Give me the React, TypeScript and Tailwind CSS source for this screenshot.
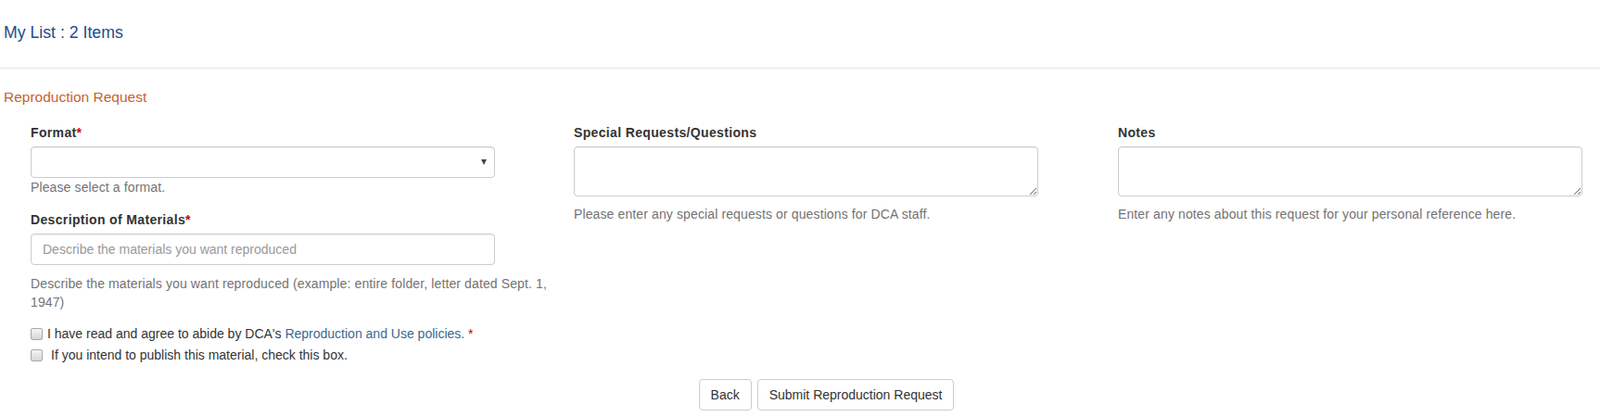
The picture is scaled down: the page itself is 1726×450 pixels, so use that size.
import React from "react";

const inputBox =
  "block w-[501px] rounded-[4px] border border-[#ccc] bg-white px-[12px] text-[14px] text-[#555] shadow-[inset_0_1px_1px_rgba(0,0,0,0.075)] outline-none";

const labelCls = "mb-[5px] block font-bold tracking-[0.35px]";
const helpCls = "text-[#737373] tracking-[0.12px]";

const Checkbox: React.FC = () => (
  <input
    type="checkbox"
    className="m-0 h-[13px] w-[13px] shrink-0 appearance-none rounded-[2px] border border-[#a9a9a9] bg-gradient-to-b from-[#f4f4f4] to-[#d6d6d6]"
  />
);

const App: React.FC = () => {
  return (
    <div
      className="min-h-[450px] w-full overflow-hidden bg-white text-[14px] leading-[20px] text-[#333]"
      style={{ fontFamily: '"Liberation Sans", Arial, sans-serif' }}
    >
      {/* Header */}
      <div className="h-[74px] border-b border-[#e5e5e5] pl-[4px] pt-[25px]">
        <h4 className="text-[17.7px] leading-[20px] text-[#1b4c8d]">My List : 2 Items</h4>
      </div>

      <div className="pl-[4px] pt-[22px]">
        <h5 className="text-[15.5px] leading-[18px] text-[#c5632f]">Reproduction Request</h5>
      </div>

      {/* Form */}
      <form className="flex pl-[33px] pt-[19px]">
        <div className="w-[566px]">
          <label className={labelCls}>
            Format<span className="text-[#c00]">*</span>
          </label>
          <div className="relative w-[501px]">
            <select className={`${inputBox} h-[34px] appearance-none`}>
              <option value=""></option>
            </select>
            <span className="pointer-events-none absolute right-[9px] top-[14px] h-0 w-0 border-x-[3.5px] border-t-[6px] border-x-transparent border-t-[#444]" />
          </div>
          <p className={helpCls}>Please select a format.</p>

          <label className={`${labelCls} mt-[15px]`}>
            Description of Materials<span className="text-[#c00]">*</span>
          </label>
          <input
            type="text"
            placeholder="Describe the materials you want reproduced"
            className={`${inputBox} h-[34px] placeholder:text-[#999]`}
          />
          <p className={`${helpCls} mt-[10px]`}>
            Describe the materials you want reproduced (example: entire folder, letter dated Sept. 1,
            1947)
          </p>

          <div className="mt-[14px] flex items-center">
            <Checkbox />
            <span className="ml-[5px]">
              I have read and agree to abide by DCA's{" "}
              <a href="#" className="text-[#3a6892]">
                Reproduction and Use policies.
              </a>{" "}
              <span className="text-[#c00]">*</span>
            </span>
          </div>
          <div className="mt-[3px] flex items-center">
            <Checkbox />
            <span className="ml-[9px]">If you intend to publish this material, check this box.</span>
          </div>
        </div>

        <div className="ml-[20px] w-[557px]">
          <label className={labelCls}>Special Requests/Questions</label>
          <textarea rows={2} className={`${inputBox} h-[54px] py-[6px]`} />
          <p className={`${helpCls} mt-[9px]`}>
            Please enter any special requests or questions for DCA staff.
          </p>
        </div>

        <div className="ml-[30px] w-[501px]">
          <label className={labelCls}>Notes</label>
          <textarea rows={2} className={`${inputBox} h-[54px] py-[6px]`} />
          <p className={`${helpCls} mt-[9px]`}>
            Enter any notes about this request for your personal reference here.
          </p>
        </div>
      </form>

      {/* Buttons */}
      <div className="mt-[16px] flex justify-center gap-[6px] pl-[57px]">
        <button
          type="button"
          className="h-[34px] rounded-[4px] border border-[#ccc] bg-white px-[12px] text-[14px] text-[#333]"
        >
          Back
        </button>
        <button
          type="submit"
          className="h-[34px] rounded-[4px] border border-[#ccc] bg-white px-[12px] text-[14px] text-[#333]"
        >
          Submit Reproduction Request
        </button>
      </div>
    </div>
  );
};

export default App;
